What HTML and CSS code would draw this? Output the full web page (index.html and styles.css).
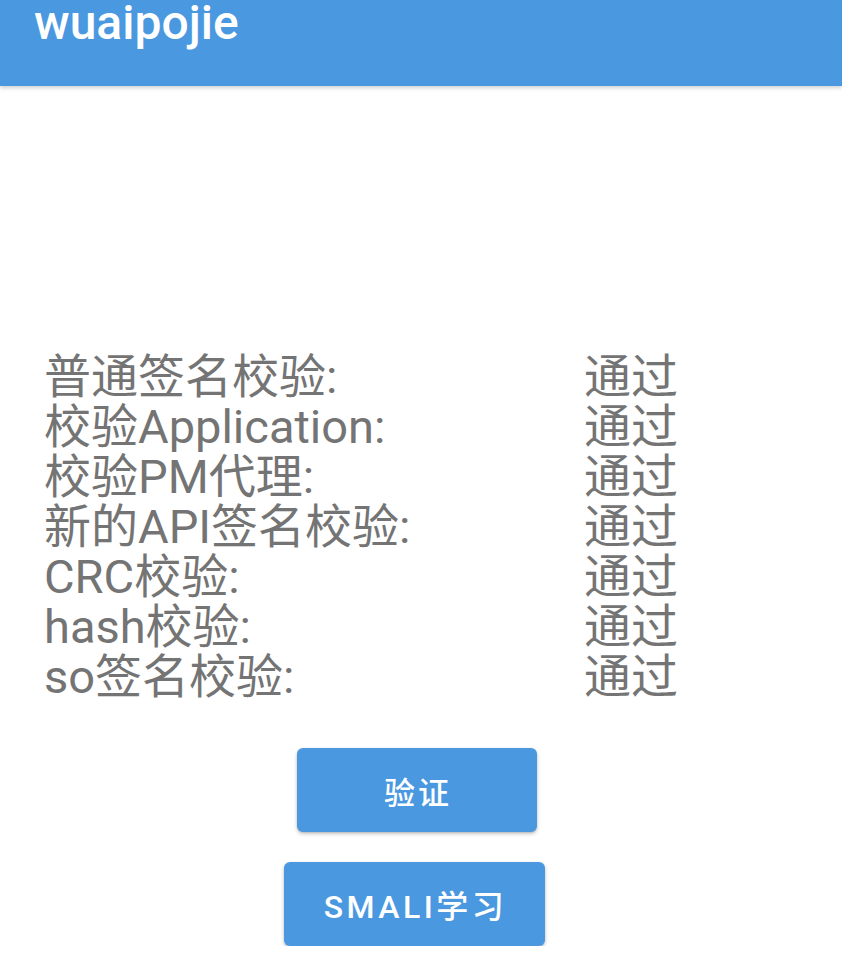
FILE: index.html
```html
<!DOCTYPE html>
<html lang="zh-CN">
<head>
<meta charset="utf-8">
<title>wuaipojie</title>
<link rel="stylesheet" href="styles.css">
</head>
<body>
<header class="toolbar">
  <h1 class="title">wuaipojie</h1>
</header>
<main class="content">
  <section class="checks">
    <div class="label">普通签名校验:</div><div class="value">通过</div>
    <div class="label">校验Application:</div><div class="value">通过</div>
    <div class="label">校验PM代理:</div><div class="value">通过</div>
    <div class="label">新的API签名校验:</div><div class="value">通过</div>
    <div class="label">CRC校验:</div><div class="value">通过</div>
    <div class="label">hash校验:</div><div class="value">通过</div>
    <div class="label">so签名校验:</div><div class="value">通过</div>
  </section>
  <div class="actions">
    <button class="btn btn-verify">验证</button>
    <button class="btn btn-smali">SMALI学习</button>
  </div>
</main>
</body>
</html>
```
FILE: styles.css
```css
html, body {
  margin: 0;
  padding: 0;
  background: #ffffff;
  font-family: Roboto, "Noto Sans CJK SC", sans-serif;
}

.toolbar {
  height: 86px;
  background: #4a98e0;
  box-shadow: 0 2px 4px rgba(0, 0, 0, 0.18);
  position: relative;
  z-index: 1;
}

.title {
  margin: 0;
  padding: 0 0 0 34px;
  font-family: Roboto, "Noto Sans CJK SC", sans-serif;
  font-weight: 500;
  font-size: 48px;
  line-height: 48px;
  color: #ffffff;
  position: relative;
  top: -1px;
}

.content {
  padding-top: 266px;
}

.checks {
  display: grid;
  grid-template-columns: 540px auto;
  padding-left: 44px;
  font-size: 47px;
  line-height: 50px;
  color: #747474;
}

.label, .value {
  white-space: nowrap;
}

.actions {
  display: flex;
  flex-direction: column;
  align-items: center;
  gap: 30px;
  margin-top: 46px;
  padding-right: 8px;
}

.btn {
  height: 84px;
  border: none;
  border-radius: 6px;
  background: #4a98e0;
  color: #ffffff;
  font-family: Roboto, "Noto Sans CJK SC", sans-serif;
  font-weight: 500;
  font-size: 32px;
  letter-spacing: 3.5px;
  box-shadow: 0 2px 4px rgba(0, 0, 0, 0.2), 0 1px 2px rgba(0, 0, 0, 0.12);
  padding: 0 38px 0 40px;
}

.btn-verify {
  width: 240px;
  font-size: 31px;
  letter-spacing: 3px;
}

.btn-smali {
  margin-right: 5px;
}
```
